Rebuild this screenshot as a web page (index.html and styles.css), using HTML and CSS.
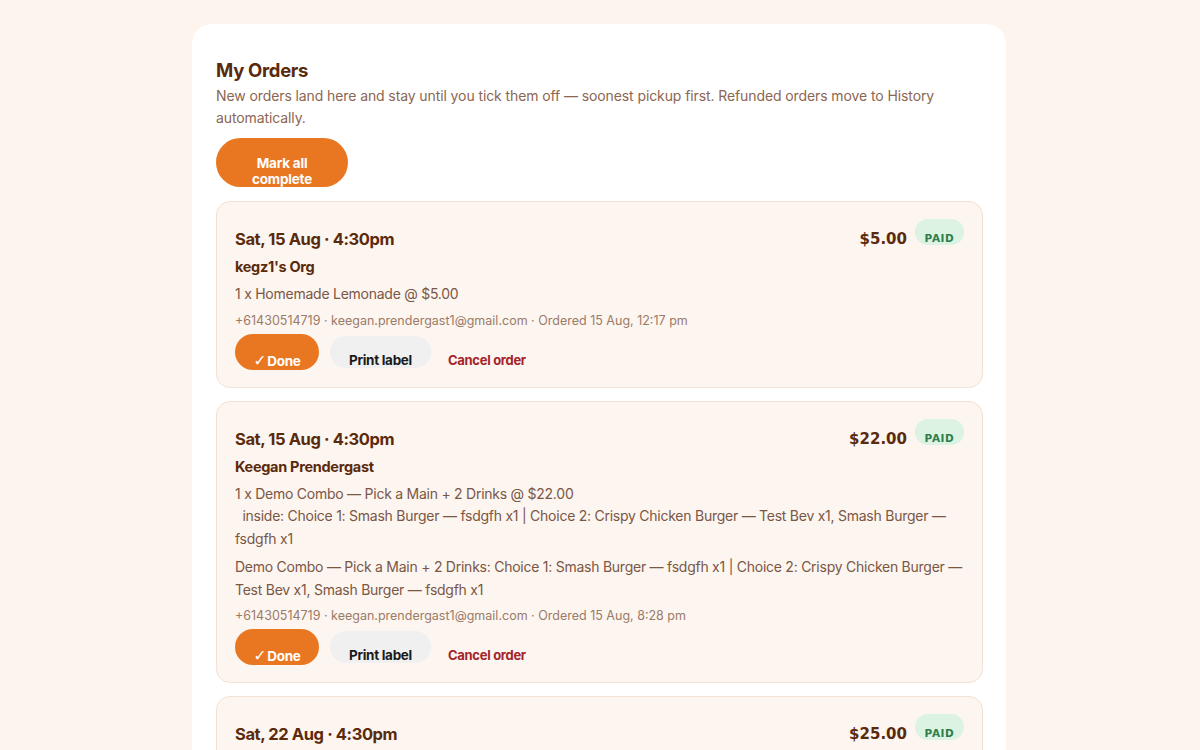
FILE: index.html
```html
<!DOCTYPE html>
<html lang="en">
<head>
<meta charset="utf-8">
<title>My Orders</title>
<link rel="stylesheet" href="styles.css">
</head>
<body>
<main class="panel">
  <h1 class="title">My Orders</h1>
  <p class="subtitle">New orders land here and stay until you tick them off — soonest pickup first. Refunded orders move to History automatically.</p>
  <button class="btn-mark">Mark all complete</button>

  <section class="orders">
    <article class="order">
      <div class="order-head">
        <div class="when">Sat, 15 Aug · 4:30pm</div>
        <div class="pay">
          <span class="price">$5.00</span>
          <span class="badge">PAID</span>
        </div>
      </div>
      <div class="who">kegz1's Org</div>
      <div class="items">1 x Homemade Lemonade @ $5.00</div>
      <div class="contact">+61430514719 · keegan.prendergast1@gmail.com · Ordered 15 Aug, 12:17 pm</div>
      <div class="actions">
        <button class="btn-done"><span class="tick">✓</span>Done</button>
        <button class="btn-print">Print label</button>
        <button class="btn-cancel">Cancel order</button>
      </div>
    </article>

    <article class="order">
      <div class="order-head">
        <div class="when">Sat, 15 Aug · 4:30pm</div>
        <div class="pay">
          <span class="price">$22.00</span>
          <span class="badge">PAID</span>
        </div>
      </div>
      <div class="who">Keegan Prendergast</div>
      <div class="items">1 x Demo Combo — Pick a Main + 2 Drinks @ $22.00
  inside: Choice 1: Smash Burger — fsdgfh x1 | Choice 2: Crispy Chicken Burger — Test Bev x1, Smash Burger — fsdgfh x1</div>
      <div class="items">Demo Combo — Pick a Main + 2 Drinks: Choice 1: Smash Burger — fsdgfh x1 | Choice 2: Crispy Chicken Burger — Test Bev x1, Smash Burger — fsdgfh x1</div>
      <div class="contact">+61430514719 · keegan.prendergast1@gmail.com · Ordered 15 Aug, 8:28 pm</div>
      <div class="actions">
        <button class="btn-done"><span class="tick">✓</span>Done</button>
        <button class="btn-print">Print label</button>
        <button class="btn-cancel">Cancel order</button>
      </div>
    </article>

    <article class="order">
      <div class="order-head">
        <div class="when">Sat, 22 Aug · 4:30pm</div>
        <div class="pay">
          <span class="price">$25.00</span>
          <span class="badge">PAID</span>
        </div>
      </div>
      <div class="who">Keegan Prendergast</div>
      <div class="items">1 x Demo Combo — Pick a Main + 2 Drinks @ $25.00</div>
      <div class="contact">+61430514719 · keegan.prendergast1@gmail.com · Ordered 15 Aug, 8:30 pm</div>
      <div class="actions">
        <button class="btn-done"><span class="tick">✓</span>Done</button>
        <button class="btn-print">Print label</button>
        <button class="btn-cancel">Cancel order</button>
      </div>
    </article>
  </section>
</main>
</body>
</html>
```

FILE: styles.css
```css
* { box-sizing: border-box; }

html, body {
  margin: 0;
  padding: 0;
  background: #fdf4ee;
  font-family: "Inter", "Noto Sans", "Liberation Sans", sans-serif;
}

body {
  padding-top: 24px;
}

.panel {
  width: 814px;
  margin-left: calc(50% - 408px);
  background: #ffffff;
  border-radius: 20px;
  padding: 24px 23px 24px 24px;
}

.title {
  margin: 10px 0 0;
  font-size: 18.5px;
  line-height: 24px;
  font-weight: 700;
  color: #5a2a0c;
  letter-spacing: -0.3px;
}

.subtitle {
  margin: 3px 0 0;
  font-size: 14px;
  line-height: 22px;
  color: #8b6652;
  letter-spacing: -0.1px;
}

button {
  font-family: inherit;
  border: 0;
  cursor: pointer;
  overflow: hidden;
}

.btn-mark {
  display: block;
  margin-top: 9px;
  width: 132px;
  height: 49px;
  padding: 16px 24px 0;
  border-radius: 25px;
  background: #e97722;
  color: #ffffff;
  font-size: 13.5px;
  font-weight: 700;
  line-height: 16px;
  letter-spacing: -0.2px;
  text-align: center;
  vertical-align: top;
}

.orders {
  margin-top: 14px;
  display: flex;
  flex-direction: column;
  gap: 13px;
}

.order {
  background: #fdf5f0;
  border: 1px solid #f3e1d5;
  border-radius: 14px;
  padding: 17px 18px 17px;
}

.order-head {
  display: flex;
  justify-content: space-between;
  align-items: flex-start;
}

.when {
  padding-top: 8px;
  font-size: 16.5px;
  line-height: 24px;
  font-weight: 700;
  color: #5a2a0c;
  letter-spacing: -0.4px;
}

.pay {
  display: flex;
  align-items: flex-start;
  gap: 8px;
}

.price {
  padding-top: 10px;
  font-family: "DejaVu Sans", "Liberation Sans", sans-serif;
  font-size: 15px;
  line-height: 20px;
  font-weight: 700;
  color: #5a2a0c;
}

.badge {
  display: block;
  width: 49px;
  height: 26px;
  padding-top: 13px;
  border-radius: 13px;
  background: #dcf3e4;
  color: #2e7d4a;
  font-family: "DejaVu Sans", "Liberation Sans", sans-serif;
  font-size: 10.5px;
  line-height: 12px;
  font-weight: 700;
  letter-spacing: 0.6px;
  text-align: center;
  overflow: hidden;
}

.who {
  margin-top: 6px;
  font-size: 14.5px;
  line-height: 20px;
  font-weight: 700;
  color: #5a2a0c;
  letter-spacing: -0.3px;
}

.items {
  margin-top: 6px;
  font-size: 14px;
  line-height: 22.5px;
  color: #7a5745;
  letter-spacing: -0.25px;
  white-space: pre-wrap;
}

.contact {
  margin-top: 6px;
  font-size: 12.5px;
  line-height: 18px;
  color: #9a7b68;
  letter-spacing: 0;
}

.actions {
  margin-top: 4px;
  display: flex;
  align-items: center;
  gap: 11px;
}

.btn-done {
  width: 84px;
  height: 36px;
  padding: 18px 0 0;
  border-radius: 18px;
  background: #e97722;
  color: #ffffff;
  font-size: 13.5px;
  font-weight: 700;
  line-height: 16px;
  letter-spacing: -0.3px;
  text-align: center;
}

.tick {
  font-family: "DejaVu Sans", sans-serif;
  font-size: 15.5px;
  font-weight: 700;
  margin-right: 1px;
}

.btn-print {
  width: 101px;
  height: 32px;
  padding: 16px 0 0;
  border-radius: 16px;
  background: #f0f0f0;
  color: #1a1a1a;
  font-size: 13.5px;
  font-weight: 700;
  line-height: 16px;
  letter-spacing: -0.3px;
  text-align: center;
}

.btn-cancel {
  height: 32px;
  padding: 16px 6px 0;
  background: transparent;
  color: #a3242a;
  font-size: 13px;
  font-weight: 700;
  line-height: 16px;
  letter-spacing: -0.3px;
}
```
